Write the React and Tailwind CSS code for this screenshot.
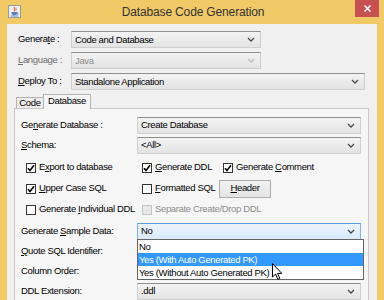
import clsx from "clsx";

const Chevron = ({ color = "#4a4a4a" }) => (
  <svg width="8" height="5" viewBox="0 0 8 5" className="shrink-0">
    <path d="M1 1 L4 4 L7 1" fill="none" stroke={color} strokeWidth="1.3" />
  </svg>
);

const Combo = ({ className, children, disabled, open }) => (
  <div
    className={clsx(
      "flex items-center justify-between pl-[3px] pr-[5px] border bg-linear-to-b",
      open
        ? "border-[#7eb4ea] border-t-[#569de5] from-[#ecf4fc] to-[#d9eafb]"
        : "border-[#cfcfcf] border-t-[#8e8e8e] from-[#f3f3f3] to-[#e3e3e3]",
      disabled ? "text-[#8d8d8d]" : "text-black",
      className
    )}
  >
    <span className="leading-none whitespace-nowrap">{children}</span>
    <Chevron color={disabled ? "#bdbdbd" : "#4a4a4a"} />
  </div>
);

const Check = ({ checked, disabled }) => (
  <span
    className={clsx(
      "w-[10px] h-[10px] border flex items-center justify-center shrink-0",
      disabled ? "border-[#c3c3c3] bg-[#e9e9e9]" : "border-[#333333] bg-white"
    )}
  >
    {checked ? (
      <svg width="8" height="8" viewBox="0 0 8 8">
        <path d="M1 4.2 L3 6.5 L7 1.2" fill="none" stroke="#000" strokeWidth="1.6" />
      </svg>
    ) : null}
  </span>
);

const CheckItem = ({ checked, disabled, className, children }) => (
  <div className={clsx("flex items-center gap-[3px] whitespace-nowrap shrink-0", className)}>
    <Check checked={checked} disabled={disabled} />
    <span className={disabled ? "text-[#8d8d8d]" : "text-black"}>{children}</span>
  </div>
);

const JavaIcon = () => (
  <svg width="13" height="13" viewBox="0 0 13 13">
    <rect x="0.5" y="0.5" width="12" height="12" fill="#eef2f7" stroke="#9a9a9a" />
    <path d="M6.5 2 C5 3.5 8 4.5 6.3 6.5" fill="none" stroke="#e2562b" strokeWidth="1.1" />
    <path d="M8.2 2.8 C7.4 3.8 8.8 4.4 8 5.6" fill="none" stroke="#e2562b" strokeWidth="0.9" />
    <path d="M3.5 7 H9 V8.6 Q9 10.3 6.2 10.3 Q3.5 10.3 3.5 8.6 Z" fill="#5a7fb5" />
    <path d="M9 7.6 Q10.6 7.6 10.2 8.8 Q9.8 9.6 8.8 9.4" fill="none" stroke="#5a7fb5" strokeWidth="0.8" />
    <path d="M2.5 11 H10.5" stroke="#5a7fb5" strokeWidth="0.9" />
  </svg>
);

const Cursor = () => (
  <svg width="12" height="18" viewBox="0 0 12 18" className="absolute left-[272px] top-[263px] z-30">
    <path
      d="M0.5 0.5 L0.5 14 L3.6 11 L5.8 16.4 L7.8 15.5 L5.6 10.4 L9.8 10.4 Z"
      fill="#ffffff"
      stroke="#000000"
      strokeWidth="1"
      strokeLinejoin="round"
    />
  </svg>
);

export default function App() {
  return (
    <div className="relative w-[384px] h-[300px] overflow-hidden bg-[#f1c967] font-['Liberation_Sans',Arial,sans-serif] text-[9.5px] tracking-[-0.35px] text-black">
      {/* title bar */}
      <div className="relative flex items-center h-[24px]">
        <div className="w-[21px] pl-[8px] mt-[-1px]">
          <JavaIcon />
        </div>
        <div className="flex-1 text-center text-[12px] tracking-[-0.15px] text-[#333333] pl-[2px]">Database Code Generation</div>
        <div className="w-[21px]" />
        <div className="absolute top-0 right-[5px] w-[24px] h-[17px] bg-[#c75050] flex items-center justify-center">
          <svg width="7" height="7" viewBox="0 0 7 7">
            <path d="M0.5 0.5 L6.5 6.5 M6.5 0.5 L0.5 6.5" stroke="#ffffff" strokeWidth="1.5" />
          </svg>
        </div>
      </div>

      {/* client area */}
      <div className="mx-[7px] h-[276px] bg-[#f0f0f0] pt-[7px] relative">
        <div className="flex flex-col gap-[4px] pl-[11px]">
          <div className="flex items-center h-[17px]">
            <span className="w-[53px] whitespace-nowrap">
              Genera<u>t</u>e :
            </span>
            <Combo className="w-[190px] h-[17px]">Code and Database</Combo>
          </div>
          <div className="flex items-center h-[17px]">
            <span className="w-[53px] whitespace-nowrap text-[#6d6d6d]">
              <u>L</u>anguage :
            </span>
            <Combo className="w-[190px] h-[17px]" disabled>
              Java
            </Combo>
          </div>
          <div className="flex items-center h-[17px]">
            <span className="w-[53px] whitespace-nowrap">
              <u>D</u>eploy To :
            </span>
            <Combo className="w-[294px] h-[17px]">Standalone Application</Combo>
          </div>
        </div>

        {/* tabs */}
        <div className="flex items-end ml-[9px] mt-[4px] h-[14px]">
          <div className="h-[11px] w-[28px] border border-b-0 border-[#b4b4b4] bg-[#ececec] flex items-center justify-center leading-none">
            Code
          </div>
          <div className="relative z-10 -ml-px -mb-px h-[15px] w-[48px] border border-b-0 border-[#b4b4b4] bg-[#f6f6f6] flex items-center justify-center leading-none pb-[2px]">
            Database
          </div>
        </div>

        {/* tab panel */}
        <div className="ml-[7px] w-[355px] h-[200px] border border-[#c8c8c8] bg-[#f6f6f6] pt-[8px] pl-[6px] relative">
          <div className="flex flex-col gap-[4px]">
            <div className="flex items-center h-[16px]">
              <span className="w-[116px] whitespace-nowrap">
                Ge<u>n</u>erate Database :
              </span>
              <Combo className="w-[224px] h-[17px]">Create Database</Combo>
            </div>
            <div className="flex items-center h-[16px]">
              <span className="w-[116px] whitespace-nowrap">
                <u>S</u>chema:
              </span>
              <Combo className="w-[224px] h-[17px]">&lt;All&gt;</Combo>
            </div>
          </div>

          <div className="flex flex-col pl-[5px] mt-[4px]">
            <div className="flex items-center h-[21px]">
              <CheckItem checked className="w-[116px]">
                E<u>x</u>port to database
              </CheckItem>
              <CheckItem checked className="w-[81px]">
                <u>G</u>enerate DDL
              </CheckItem>
              <CheckItem checked>
                Generate <u>C</u>omment
              </CheckItem>
            </div>
            <div className="flex items-center h-[21px]">
              <CheckItem checked className="w-[116px]">
                <u>U</u>pper Case SQL
              </CheckItem>
              <CheckItem className="w-[77px]">
                <u>F</u>ormatted SQL
              </CheckItem>
              <div className="w-[52px] h-[18px] border border-[#adadad] bg-linear-to-b from-[#f2f2f2] to-[#e4e4e4] flex items-center justify-center">
                <u>H</u>eader
              </div>
            </div>
            <div className="flex items-center h-[21px]">
              <CheckItem className="w-[116px]">
                Generate <u>I</u>ndividual DDL
              </CheckItem>
              <CheckItem disabled>Separate Create/Drop DDL</CheckItem>
            </div>
          </div>

          <div className="flex flex-col gap-[4px] mt-[3px]">
            <div className="relative flex items-center h-[16px]">
              <span className="w-[116px] whitespace-nowrap">
                Generate <u>S</u>ample Data:
              </span>
              <Combo className="w-[224px] h-[17px]" open>
                No
              </Combo>
              {/* open list */}
              <div className="absolute z-20 left-[116px] top-[16px] w-[227px] border border-[#646464] bg-white leading-none whitespace-nowrap">
                <div className="h-[13px] pl-[1px] flex items-center">No</div>
                <div className="h-[13px] pl-[1px] flex items-center bg-[#3399ff] text-white">Yes (With Auto Generated PK)</div>
                <div className="h-[13px] pl-[1px] flex items-center">Yes (Without Auto Generated PK)</div>
              </div>
            </div>
            <div className="flex items-center h-[16px]">
              <span className="w-[116px] whitespace-nowrap">
                <u>Q</u>uote SQL Identifier:
              </span>
              <Combo className="w-[224px] h-[17px]" />
            </div>
            <div className="flex items-center h-[16px]">
              <span className="w-[116px] whitespace-nowrap">Column Order:</span>
              <Combo className="w-[224px] h-[17px]" />
            </div>
            <div className="flex items-center h-[16px]">
              <span className="w-[116px] whitespace-nowrap">DDL Extension:</span>
              <Combo className="w-[224px] h-[17px]">.ddl</Combo>
            </div>
          </div>
        </div>
      </div>

      <Cursor />
    </div>
  );
}
